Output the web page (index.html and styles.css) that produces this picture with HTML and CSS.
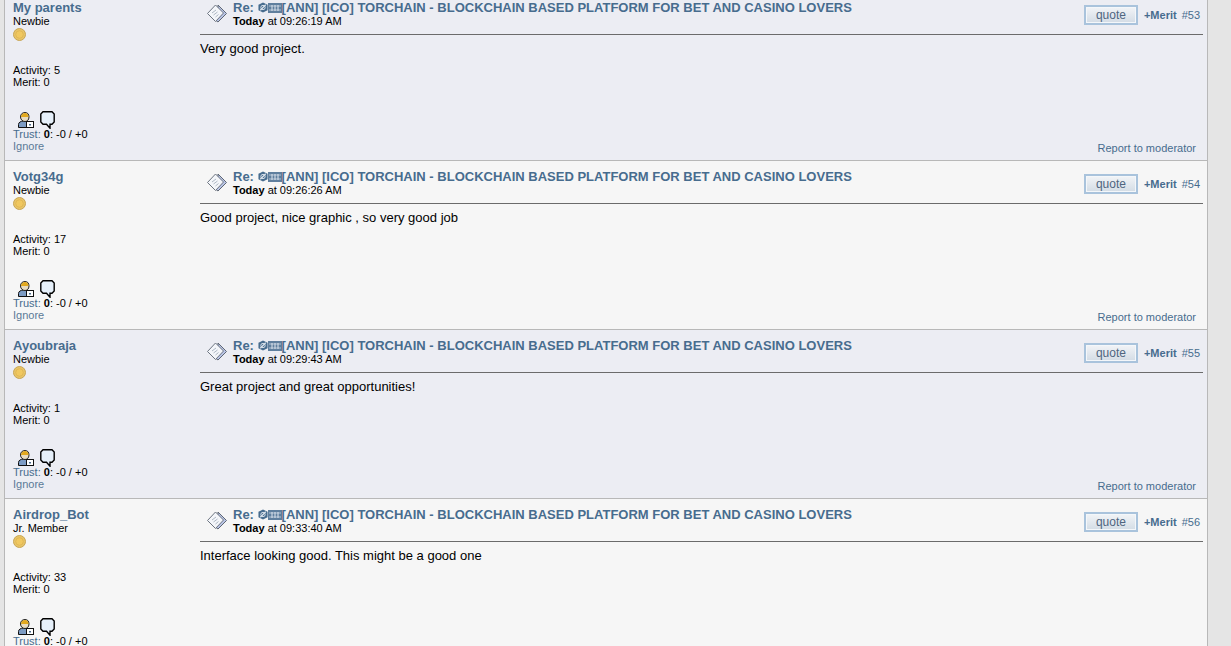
FILE: index.html
```html
<!DOCTYPE html>
<html lang="en">
<head>
    <meta charset="UTF-8">
    <title>TORCHAIN thread</title>
    <link rel="stylesheet" href="styles.css">
</head>
<body>
    <svg class="defs" width="0" height="0">
        <symbol id="xx" viewBox="0 0 20 19">
            <path d="M11 1 19.500 9.500 11 18 7 15 11 3z" fill="#b9c4e6" stroke="#5f6773"/>
            <path d="M8.500 1 16.500 9 8.500 17.500.5 9.500z" fill="#f4f6fa" stroke="#6c7480"/>
            <path d="M5 9l4-3M6.500 11l4-3M8.500 13l3-2.500" fill="none" stroke="#aeb8c4"/>
        </symbol>
        <symbol id="coin" viewBox="0 0 13 13">
            <circle cx="6.500" cy="6.500" r="6" fill="#e8c568" stroke="#c8a554"/>
            <circle cx="6.500" cy="6.500" r="3.800" fill="#f0c860" stroke="#dbb04e" stroke-width=".7"/>
        </symbol>
        <symbol id="person" viewBox="0 0 16 16">
            <path d="M.5 15.500v-3c0-2 2-3.500 5.500-3.500s5 1.500 5 3.500v3z" fill="#7d9cc4" stroke="#111"/>
            <path d="M2.500 5c0-3 2-4.500 4.500-4.500s4 1.500 4 4.500-2 4.500-4 4.500-4.500-1.500-4.500-4.500z" fill="#e8dcc0" stroke="#222"/>
            <path d="M3 5c0-2.500 2-4 4-4s3.500 1.500 3.500 4z" fill="#e2a91f"/>
            <rect x="8.500" y="9.500" width="7" height="6" fill="#fff" stroke="#111"/>
            <rect x="11" y="12" width="2" height="1.500" fill="#4a6a8c"/>
        </symbol>
        <symbol id="bubble" viewBox="0 0 15 18">
            <path d="M3 .8h9l2.200 2.200v8L12 13.200h-2v4l-3.500-4H3L.8 11V3z" fill="#e6f0fa" stroke="#000" stroke-width="1.400"/>
        </symbol>
        <symbol id="gear" viewBox="0 0 11 12">
            <path d="M5.500.5 10.500 3v6l-5 2.500-5-2.500V3z" fill="#476c8e"/>
            <path d="M2.500 9 8.500 3" stroke="#dfe6ee" stroke-width="1.300"/>
            <circle cx="5.500" cy="6" r="2.400" fill="none" stroke="#dfe6ee"/>
        </symbol>
        <symbol id="chips" viewBox="0 0 14 10">
            <rect width="14" height="10" fill="#5f7f9e"/>
            <path d="M1 3h12M1 7h12" stroke="#b6c6d6"/>
            <path d="M4 2v6M7 2v6M10 2v6" stroke="#dfe6ee"/>
        </symbol>
    </svg>

    <div class="thread">
        <div class="post odd">
            <div class="poster">
                <a class="name">My parents</a>
                <div>Newbie</div>
                <svg class="coin"><use href="#coin"/></svg>
                <div class="stats">Activity: 5<br>Merit: 0</div>
                <div class="contact">
                    <svg class="person"><use href="#person"/></svg>
                    <svg class="bubble"><use href="#bubble"/></svg>
                </div>
                <div class="trust"><a>Trust:</a> <b>0</b>: -0 / +0</div>
                <a class="ignore">Ignore</a>
            </div>
            <div class="body">
                <div class="head">
                    <svg class="xx"><use href="#xx"/></svg>
                    <div class="title">
                        <a class="subject">Re: <svg class="gear"><use href="#gear"/></svg><svg class="chips"><use href="#chips"/></svg>[ANN] [ICO] TORCHAIN - BLOCKCHAIN BASED PLATFORM FOR BET AND CASINO LOVERS</a>
                        <div class="date"><b>Today</b> at 09:26:19 AM</div>
                    </div>
                    <button class="quote">quote</button>
                    <a class="merit">+Merit</a>
                    <a class="num">#53</a>
                </div>
                <div class="text">Very good project.</div>
                <div class="foot"><a>Report to moderator</a></div>
            </div>
        </div>
        <div class="post even">
            <div class="poster">
                <a class="name">Votg34g</a>
                <div>Newbie</div>
                <svg class="coin"><use href="#coin"/></svg>
                <div class="stats">Activity: 17<br>Merit: 0</div>
                <div class="contact">
                    <svg class="person"><use href="#person"/></svg>
                    <svg class="bubble"><use href="#bubble"/></svg>
                </div>
                <div class="trust"><a>Trust:</a> <b>0</b>: -0 / +0</div>
                <a class="ignore">Ignore</a>
            </div>
            <div class="body">
                <div class="head">
                    <svg class="xx"><use href="#xx"/></svg>
                    <div class="title">
                        <a class="subject">Re: <svg class="gear"><use href="#gear"/></svg><svg class="chips"><use href="#chips"/></svg>[ANN] [ICO] TORCHAIN - BLOCKCHAIN BASED PLATFORM FOR BET AND CASINO LOVERS</a>
                        <div class="date"><b>Today</b> at 09:26:26 AM</div>
                    </div>
                    <button class="quote">quote</button>
                    <a class="merit">+Merit</a>
                    <a class="num">#54</a>
                </div>
                <div class="text">Good project, nice graphic , so very good job</div>
                <div class="foot"><a>Report to moderator</a></div>
            </div>
        </div>
        <div class="post odd">
            <div class="poster">
                <a class="name">Ayoubraja</a>
                <div>Newbie</div>
                <svg class="coin"><use href="#coin"/></svg>
                <div class="stats">Activity: 1<br>Merit: 0</div>
                <div class="contact">
                    <svg class="person"><use href="#person"/></svg>
                    <svg class="bubble"><use href="#bubble"/></svg>
                </div>
                <div class="trust"><a>Trust:</a> <b>0</b>: -0 / +0</div>
                <a class="ignore">Ignore</a>
            </div>
            <div class="body">
                <div class="head">
                    <svg class="xx"><use href="#xx"/></svg>
                    <div class="title">
                        <a class="subject">Re: <svg class="gear"><use href="#gear"/></svg><svg class="chips"><use href="#chips"/></svg>[ANN] [ICO] TORCHAIN - BLOCKCHAIN BASED PLATFORM FOR BET AND CASINO LOVERS</a>
                        <div class="date"><b>Today</b> at 09:29:43 AM</div>
                    </div>
                    <button class="quote">quote</button>
                    <a class="merit">+Merit</a>
                    <a class="num">#55</a>
                </div>
                <div class="text">Great project and great opportunities!</div>
                <div class="foot"><a>Report to moderator</a></div>
            </div>
        </div>
        <div class="post even">
            <div class="poster">
                <a class="name">Airdrop_Bot</a>
                <div>Jr. Member</div>
                <svg class="coin"><use href="#coin"/></svg>
                <div class="stats">Activity: 33<br>Merit: 0</div>
                <div class="contact">
                    <svg class="person"><use href="#person"/></svg>
                    <svg class="bubble"><use href="#bubble"/></svg>
                </div>
                <div class="trust"><a>Trust:</a> <b>0</b>: -0 / +0</div>
            </div>
            <div class="body">
                <div class="head">
                    <svg class="xx"><use href="#xx"/></svg>
                    <div class="title">
                        <a class="subject">Re: <svg class="gear"><use href="#gear"/></svg><svg class="chips"><use href="#chips"/></svg>[ANN] [ICO] TORCHAIN - BLOCKCHAIN BASED PLATFORM FOR BET AND CASINO LOVERS</a>
                        <div class="date"><b>Today</b> at 09:33:40 AM</div>
                    </div>
                    <button class="quote">quote</button>
                    <a class="merit">+Merit</a>
                    <a class="num">#56</a>
                </div>
                <div class="text">Interface looking good. This might be a good one</div>
            </div>
        </div>
    </div>
</body>
</html>
```

FILE: styles.css
```css
/* Page - the thread is scrolled a little, so the first post is cut off */
html {
    overflow: hidden;
    height: 100%;
}

body {
    background: #e5e5e5;
    margin: 0;
    height: 100%;
    overflow: hidden;
    font-family: 'Liberation Sans', Arial, sans-serif;
    font-size: 11px;
    color: #000;
}

.defs {
    position: absolute;
}

.thread {
    margin: -8px 23px 0 4px;
    border-left: 1px solid #b8b8b8;
    border-right: 1px solid #b8b8b8;
}

a {
    color: #476c8e;
}

/* Post rows */
.post {
    display: flex;
    height: 168px;
    border-bottom: 1px solid #b8b8b8;
}

.odd {
    background-color: #ecedf3;
}

.even {
    background-color: #f6f6f6;
}

/* Left column */
.poster {
    width: 187px;
    flex-shrink: 0;
    padding: 8px 0 0 8px;
    box-sizing: border-box;
    line-height: 12px;
}

.name {
    display: block;
    font-size: 13px;
    font-weight: bold;
    line-height: 15px;
}

.coin {
    display: block;
    width: 13px;
    height: 13px;
    margin-top: 1px;
}

.stats {
    margin-top: 23px;
}

.contact {
    display: flex;
    align-items: flex-start;
    height: 18px;
    margin-top: 23px;
    padding: 0 0 0 5px;
    gap: 6px;
}

.person {
    width: 16px;
    height: 16px;
    margin-top: 1px;
}

.bubble {
    width: 15px;
    height: 18px;
}

.trust {
    margin-top: -1px;
}

.ignore {
    display: block;
    color: #5b7a97;
}

/* Right column */
.body {
    flex: 1;
    display: flex;
    flex-direction: column;
    padding: 0 4px 0 8px;
    min-width: 0;
}

.head {
    display: flex;
    align-items: center;
    height: 43px;
    padding: 8px 0 4px;
    box-sizing: border-box;
    border-bottom: 1px solid #6b6b6b;
}

.xx {
    width: 20px;
    height: 19px;
    margin: 4px 6px 0 7px;
    align-self: flex-start;
}

.title {
    flex: 1;
    align-self: flex-start;
    line-height: 12px;
}

.subject {
    display: block;
    font-size: 13px;
    font-weight: bold;
    line-height: 15px;
}

.gear {
    width: 10px;
    height: 11px;
    vertical-align: -1px;
}

.chips {
    width: 14px;
    height: 10px;
    vertical-align: -1px;
}

.quote {
    width: 54px;
    height: 20px;
    padding: 0;
    margin: 0 6px 0 0;
    border: 2px solid #a9c3dc;
    box-shadow: inset 0 0 0 1px #f4f7fa;
    background: linear-gradient(#f2f4f7, #d3dce5);
    font-family: inherit;
    font-size: 12px;
    color: #4f6580;
}

.merit {
    font-weight: bold;
    margin-right: 5px;
}

.num {
    margin-right: 3px;
}

.text {
    flex: 1;
    padding-top: 6px;
    font-size: 13px;
    line-height: 15px;
}

.foot {
    text-align: right;
    padding: 0 7px 6px 0;
}
```
